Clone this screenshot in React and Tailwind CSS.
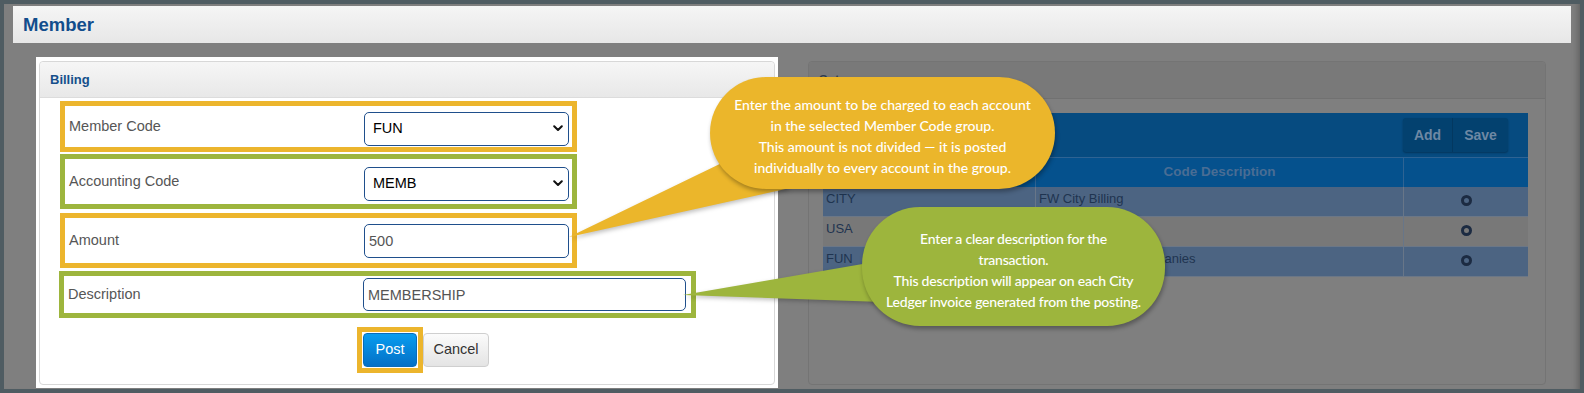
import React from 'react';

// one annotated form row (label + control) with a coloured highlight box
function FieldRow({ label, color, className, children }) {
  return (
    <div className={`flex items-center border-[5px] box-border ${color} ${className}`}>
      <label className="w-[299px] pl-[4px] text-[14.5px] text-[#565656]">{label}</label>
      {children}
    </div>
  );
}

function SelectBox({ value }) {
  return (
    <div className="relative w-[205px] h-[34px]">
      <select
        defaultValue={value}
        className="appearance-none w-full h-full border border-[#1f4f8c] rounded-[5px] bg-white pl-[8px] text-[14.5px] text-black outline-none"
      >
        <option value={value}>{value}</option>
      </select>
      <svg className="absolute right-[6px] top-[13px] pointer-events-none" width="10" height="7" viewBox="0 0 10 7">
        <path d="M1.2 1.2 L5 5 L8.8 1.2" fill="none" stroke="#111" strokeWidth="2" strokeLinecap="round" strokeLinejoin="round" />
      </svg>
    </div>
  );
}

function CircleIcon() {
  return <span className="inline-block w-[11px] h-[11px] rounded-full border-[3px] border-[#1c2b42]" />;
}

export default function App() {
  const rows = [
    { code: 'CITY', desc: 'FW City Billing', bg: 'bg-[#4c6482]' },
    { code: 'USA', desc: 'USA Billing', bg: 'bg-[#787878]' },
    { code: 'FUN', desc: 'Fort Worth Fun Companies', bg: 'bg-[#4c6482]' },
  ];

  return (
    <div className="relative w-[1584px] h-[393px] bg-[#4f5c62] p-[4px] overflow-hidden font-['Liberation_Sans',Arial,sans-serif]">
      <div className="h-full bg-[#7f7f7f] pt-[2px] shadow-[inset_-8px_0_6px_-6px_rgba(0,0,0,0.25)]">
        {/* page title bar */}
        <div className="mx-[9px] h-[37px] bg-gradient-to-b from-[#f5f5f5] to-[#e7e7e7] flex items-center pl-[10px]">
          <h1 className="text-[18.5px] font-bold text-[#124d8c]">Member</h1>
        </div>

        <div className="flex mt-[14px] ml-[32px]">
          {/* Billing panel (highlighted) */}
          <div className="w-[742px] h-[331px] bg-white px-[3px] pt-[4px] pb-[3px]">
            <div className="h-full border border-[#d8d8d8] rounded-[4px]">
              <div className="h-[36px] bg-gradient-to-b from-[#f6f6f6] to-[#e8e8e8] border-b border-[#dcdcdc] rounded-t-[4px] flex items-center pl-[10px]">
                <h2 className="text-[13px] font-bold text-[#154f8b]">Billing</h2>
              </div>
              <div className="pl-[20px] pt-[3px]">
                <FieldRow label="Member Code" color="border-[#ecb52d]" className="w-[517px] h-[51px]">
                  <div className="mt-[5px]"><SelectBox value="FUN" /></div>
                </FieldRow>
                <FieldRow label="Accounting Code" color="border-[#9db53d]" className="w-[517px] h-[55px] mt-[2px]">
                  <div className="mt-[5px]"><SelectBox value="MEMB" /></div>
                </FieldRow>
                <FieldRow label="Amount" color="border-[#ecb52d]" className="w-[517px] h-[55px] mt-[4px]">
                  <input
                    defaultValue="500"
                    className="w-[205px] h-[34px] border border-[#1f4f8c] rounded-[5px] px-[4px] text-[14.5px] text-[#555] outline-none"
                  />
                </FieldRow>
                <FieldRow label="Description" color="border-[#9db53d]" className="w-[637px] h-[47px] mt-[3px] -ml-[1px]">
                  <input
                    defaultValue="MEMBERSHIP"
                    className="w-[323px] h-[33px] border border-[#1f4f8c] rounded-[5px] px-[4px] text-[14.5px] text-[#555] outline-none"
                  />
                </FieldRow>
                <div className="flex mt-[9px] ml-[297px]">
                  <div className="border-[5px] border-[#ecb52d] p-[1px]">
                    <button className="w-[54px] h-[34px] rounded-[4px] bg-gradient-to-b from-[#0a9df0] to-[#0570c6] border border-[#0a6cbb] text-white text-[14.5px]">
                      Post
                    </button>
                  </div>
                  <button className="mt-[6px] w-[66px] h-[34px] rounded-[4px] bg-gradient-to-b from-[#fbfbfb] to-[#e4e4e4] border border-[#cfcfcf] text-[#333] text-[14.5px]">
                    Cancel
                  </button>
                </div>
              </div>
            </div>
          </div>

          {/* Setup panel (dimmed) */}
          <div className="ml-[30px] mt-[4px] w-[738px] h-[324px] border border-[#747474] rounded-[4px]">
            <div className="h-[37px] bg-[#797979] border-b border-[#717171] rounded-t-[4px] flex items-start pt-[8px] pl-[10px]">
              <h2 className="text-[13px] font-bold text-[#2f3c4c]">Setup</h2>
            </div>
            <div className="ml-[14px] mt-[14px] w-[705px] text-[13px]">
              <div className="h-[44px] bg-[#064b80] flex items-center justify-end pr-[20px]">
                <div className="flex h-[34px] rounded-[3px] overflow-hidden bg-[#03416f] shadow-[0_1px_2px_rgba(0,0,0,0.3)]">
                  <span className="w-[50px] flex items-center justify-center font-bold text-[14px] text-[#6e88a4] border-r border-[#033860]">Add</span>
                  <span className="w-[55px] flex items-center justify-center font-bold text-[14px] text-[#6e88a4]">Save</span>
                </div>
              </div>
              <div className="grid grid-cols-[212px_368px_125px] h-[30px] bg-[#05518d] border-t border-[#2e6393]">
                <div />
                <div className="border-l border-[#2e6393] flex items-center justify-center font-bold text-[13.5px] text-[#4a6d94]">Code Description</div>
                <div className="border-l border-[#2e6393]" />
              </div>
              {rows.map((r) => (
                <div key={r.code} className={`grid grid-cols-[212px_368px_125px] h-[30px] ${r.bg} border-b border-[#6b7787] text-[#1f3450]`}>
                  <div className="pl-[3px] pt-[2px]">{r.code}</div>
                  <div className="border-l border-[#687688] pl-[3px] pt-[2px]">{r.desc}</div>
                  <div className="border-l border-[#687688] flex justify-center pt-[8px]">
                    <CircleIcon />
                  </div>
                </div>
              ))}
            </div>
          </div>
        </div>
      </div>

      {/* callout tails */}
      <svg className="absolute left-0 top-0 pointer-events-none" width="1584" height="393">
        <polygon points="569,237 728,160 790,188" fill="#ebb62b" style={{ filter: 'drop-shadow(1px 2px 2px rgba(0,0,0,0.25))' }} />
        <polygon points="683,295 880,261 882,302" fill="#9db53d" style={{ filter: 'drop-shadow(1px 2px 2px rgba(0,0,0,0.25))' }} />
      </svg>

      {/* amount callout */}
      <div className="absolute left-[710px] top-[77px] w-[345px] h-[112px] rounded-[56px] bg-[#ebb62b] shadow-[1px_3px_4px_rgba(0,0,0,0.3)] pt-[17px] text-center text-white text-[14px] leading-[21px] font-medium whitespace-nowrap font-['Lato',sans-serif]">
        <p>Enter the amount to be charged to each account</p>
        <p>in the selected Member Code group.</p>
        <p>This amount is not divided — it is posted</p>
        <p>individually to every account in the group.</p>
      </div>

      {/* description callout */}
      <div className="absolute left-[862px] top-[207px] w-[303px] h-[119px] rounded-[58px] bg-[#9db53d] shadow-[1px_3px_4px_rgba(0,0,0,0.3)] pt-[21px] text-center text-white text-[14px] leading-[21px] font-medium whitespace-nowrap tracking-[-0.2px] font-['Lato',sans-serif]">
        <p>Enter a clear description for the</p>
        <p>transaction.</p>
        <p>This description will appear on each City</p>
        <p>Ledger invoice generated from the posting.</p>
      </div>
    </div>
  );
}
